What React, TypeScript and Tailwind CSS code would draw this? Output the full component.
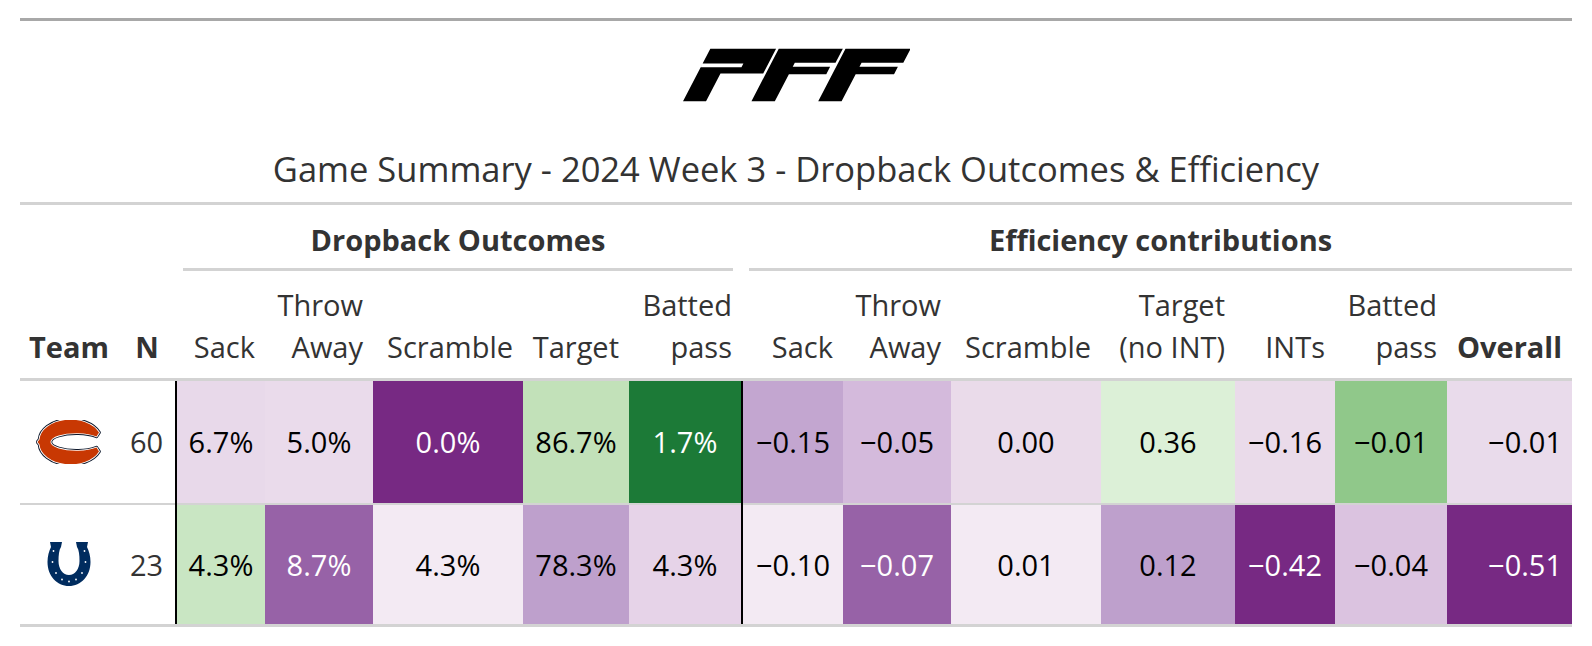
import React from 'react';

type Cell = { v: string; bg: string; light?: boolean };

const cols = [98, 58, 89, 108, 150, 106, 113, 101, 108, 150, 134, 100, 112, 125];

const labels: { top?: string; bottom: string; bold?: boolean }[] = [
  { top: undefined, bottom: 'Sack' },
  { top: 'Throw', bottom: 'Away' },
  { top: undefined, bottom: 'Scramble' },
  { top: undefined, bottom: 'Target' },
  { top: 'Batted', bottom: 'pass' },
  { top: undefined, bottom: 'Sack' },
  { top: 'Throw', bottom: 'Away' },
  { top: undefined, bottom: 'Scramble' },
  { top: 'Target', bottom: '(no INT)' },
  { top: undefined, bottom: 'INTs' },
  { top: 'Batted', bottom: 'pass' },
  { top: undefined, bottom: 'Overall', bold: true },
];

const rows: { team: 'CHI' | 'IND'; n: number; cells: Cell[] }[] = [
  {
    team: 'CHI',
    n: 60,
    cells: [
      { v: '6.7%', bg: '#e8d9ea' },
      { v: '5.0%', bg: '#eadbeb' },
      { v: '0.0%', bg: '#772983', light: true },
      { v: '86.7%', bg: '#c2e1b9' },
      { v: '1.7%', bg: '#1c7a37', light: true },
      { v: '\u22120.15', bg: '#c3a6d0' },
      { v: '\u22120.05', bg: '#d4badc' },
      { v: '0.00', bg: '#eadbea' },
      { v: '0.36', bg: '#dcf0d7' },
      { v: '\u22120.16', bg: '#eadbea' },
      { v: '\u22120.01', bg: '#90c88a' },
      { v: '\u22120.01', bg: '#e9dbeb' },
    ],
  },
  {
    team: 'IND',
    n: 23,
    cells: [
      { v: '4.3%', bg: '#c9e6c3' },
      { v: '8.7%', bg: '#9762a7', light: true },
      { v: '4.3%', bg: '#f3eaf3' },
      { v: '78.3%', bg: '#bea0cc' },
      { v: '4.3%', bg: '#e6d3e8' },
      { v: '\u22120.10', bg: '#f3eaf3' },
      { v: '\u22120.07', bg: '#9762a7', light: true },
      { v: '0.01', bg: '#f3eaf3' },
      { v: '0.12', bg: '#bea0cc' },
      { v: '\u22120.42', bg: '#772983', light: true },
      { v: '\u22120.04', bg: '#dbc3e0' },
      { v: '\u22120.51', bg: '#772983', light: true },
    ],
  },
];

function PffLogo() {
  // letters drawn upright, then slanted
  return (
    <svg width="227" height="54" viewBox="68 58 680 157" aria-label="PFF">
      <g transform="translate(112,0) skewX(-27.5)" fill="#000">
        <path d="M68 58 H265 V132 H137 V215 H68 Z M68 102 V113 H190 V102 Z" fillRule="evenodd" />
        <path d="M273 58 H465 V100 H343 V112 H455 V134 H343 V215 H273 Z" />
        <path d="M473 58 H668 V100 H543 V112 H658 V134 H543 V215 H473 Z" />
      </g>
    </svg>
  );
}

const bearsPath =
  'M62 12.5 A31 21 0 0 0 2.5 19.5 L0.5 22 L2.5 24.5 A31 21 0 0 0 62 31.5 L59.5 27.6 A26 8.8 0 1 1 59.5 16.4 Z';

function BearsLogo() {
  return (
    <svg width="66" height="44" viewBox="-1 0 66 44">
      <path d={bearsPath} fill="none" stroke="#0b162a" strokeWidth="3.6" strokeLinejoin="round" />
      <path d={bearsPath} fill="none" stroke="#ffffff" strokeWidth="1.8" strokeLinejoin="round" />
      <path d={bearsPath} fill="#c83803" />
    </svg>
  );
}

function ColtsLogo() {
  const dots = [
    [6.5, 10],
    [37.5, 10],
    [5.5, 21],
    [38.5, 21],
    [9, 32],
    [35, 32],
    [22, 40.5],
    [15, 38.5],
    [29, 38.5],
  ];
  return (
    <svg width="44" height="46" viewBox="0 0 44 46">
      <path
        d="M3 1 H15 L14 6 C12 9 11.5 14 11.5 20 C11.5 28 16 34 22 34 C28 34 32.5 28 32.5 20 C32.5 14 32 9 30 6 L29 1 H41 L40 6 C42 10 43.5 15 43.5 21 C43.5 35 34 45 22 45 C10 45 0.5 35 0.5 21 C0.5 15 2 10 4 6 Z"
        fill="#002c5f"
      />
      {dots.map(([x, y], i) => (
        <circle key={i} cx={x} cy={y} r="0.9" fill="#ffffff" />
      ))}
    </svg>
  );
}

export default function App() {
  return (
    <div className="w-[1592px] bg-white px-[20px] pt-[18px] font-['Open_Sans',sans-serif] text-[#333333]">
      <div className="border-t-[3px] border-b-[3px] border-t-[#a8a8a8] border-b-[#d3d3d3] pt-[27px] pb-[9px]">
        <div className="flex justify-center">
          <PffLogo />
        </div>
        <div className="mt-[43px] text-center text-[34.5px] leading-[48px]">
          Game Summary - 2024 Week 3 - Dropback Outcomes &amp; Efficiency
        </div>
      </div>

      <table className="w-[1552px] table-fixed border-collapse">
        <colgroup>
          {cols.map((w, i) => (
            <col key={i} style={{ width: w }} />
          ))}
        </colgroup>
        <thead>
          <tr>
            <th colSpan={2} />
            <th colSpan={5} className="pt-[14px] pl-[7px] pr-[9px] font-normal">
              <div className="border-b-[3px] border-[#d3d3d3] pb-[7px] text-[29px] font-bold leading-[42px]">
                Dropback Outcomes
              </div>
            </th>
            <th colSpan={7} className="pt-[14px] pl-[7px] pr-0 font-normal">
              <div className="border-b-[3px] border-[#d3d3d3] pb-[7px] text-[29px] font-bold leading-[42px]">
                Efficiency contributions
              </div>
            </th>
          </tr>
          <tr className="border-b-[3px] border-[#d3d3d3]">
            <th className="pt-[13px] pb-[10px] text-center align-bottom text-[29px] font-bold leading-[42px]">Team</th>
            <th className="pt-[13px] pb-[10px] text-center align-bottom text-[29px] font-bold leading-[42px]">N</th>
            {labels.map((l, i) => (
              <th
                key={i}
                className={`pt-[13px] pb-[10px] pr-[10px] text-right align-bottom text-[29px] leading-[42px] whitespace-nowrap ${
                  l.bold ? 'font-bold' : 'font-normal'
                }`}
              >
                {l.top && <div>{l.top}</div>}
                <div>{l.bottom}</div>
              </th>
            ))}
          </tr>
        </thead>
        <tbody>
          {rows.map((r, ri) => (
            <tr
              key={r.team}
              className={ri === 0 ? 'border-b-2 border-[#d3d3d3]' : 'border-b-[3px] border-[#d3d3d3]'}
            >
              <td className={`${ri === 0 ? 'h-[124px]' : 'h-[122px]'} p-0`}>
                <div className="flex items-center justify-center">
                  {r.team === 'CHI' ? <BearsLogo /> : <ColtsLogo />}
                </div>
              </td>
              <td className="p-0 text-center text-[29px] text-[#333333]">{r.n}</td>
              {r.cells.map((c, ci) => (
                <td
                  key={ci}
                  style={{ backgroundColor: c.bg }}
                  className={`p-0 text-[29px] whitespace-nowrap ${c.light ? 'text-white' : 'text-black'} ${
                    ci === 0 || ci === 5 ? 'border-l-2 border-l-black' : ''
                  } ${ci === 11 ? 'pr-[10px] text-right' : 'text-center'}`}
                >
                  {c.v}
                </td>
              ))}
            </tr>
          ))}
        </tbody>
      </table>
    </div>
  );
}
